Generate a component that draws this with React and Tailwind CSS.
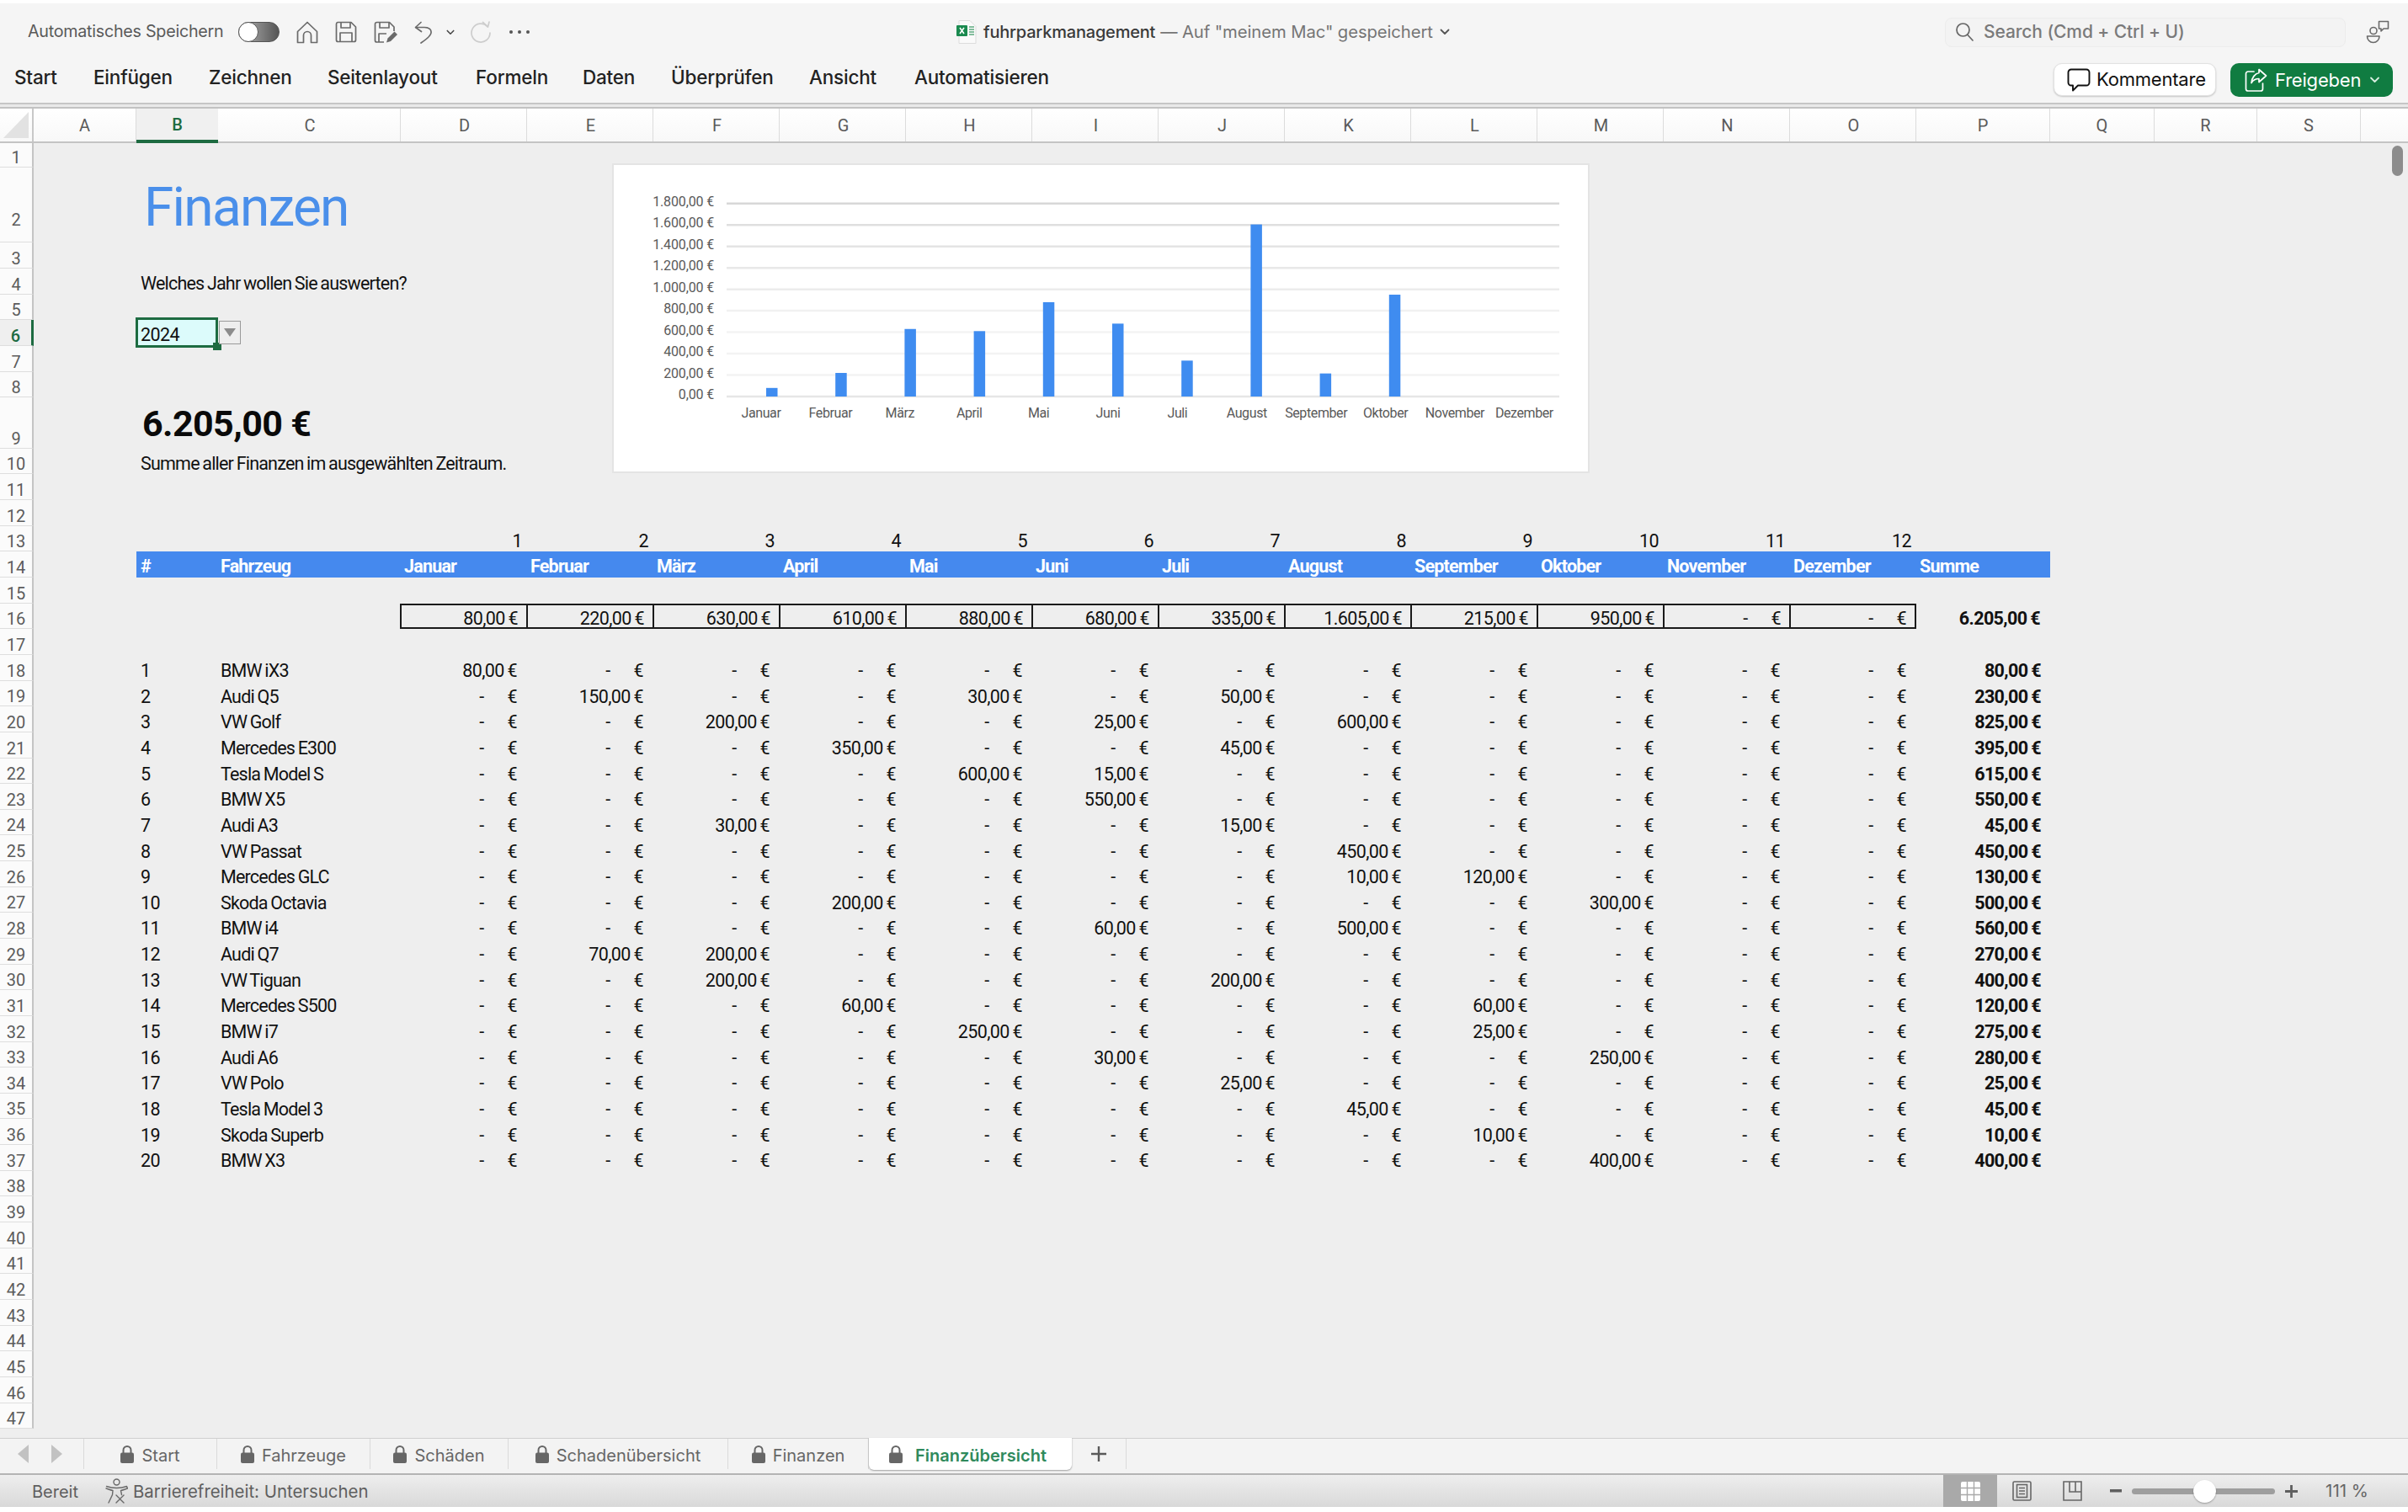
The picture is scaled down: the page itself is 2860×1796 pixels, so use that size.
import React from "react";

const MONTHS = ["Januar","Februar","März","April","Mai","Juni","Juli","August","September","Oktober","November","Dezember"];
const LETTERS = ["D","E","F","G","H","I","J","K","L","M","N","O"];
const TOTALS = ["80,00 €","220,00 €","630,00 €","610,00 €","880,00 €","680,00 €","335,00 €","1.605,00 €","215,00 €","950,00 €",null,null];
const VEHICLES = [
  ["BMW iX3",{0:"80,00"},"80,00"],
  ["Audi Q5",{1:"150,00",4:"30,00",6:"50,00"},"230,00"],
  ["VW Golf",{2:"200,00",5:"25,00",7:"600,00"},"825,00"],
  ["Mercedes E300",{3:"350,00",6:"45,00"},"395,00"],
  ["Tesla Model S",{4:"600,00",5:"15,00"},"615,00"],
  ["BMW X5",{5:"550,00"},"550,00"],
  ["Audi A3",{2:"30,00",6:"15,00"},"45,00"],
  ["VW Passat",{7:"450,00"},"450,00"],
  ["Mercedes GLC",{7:"10,00",8:"120,00"},"130,00"],
  ["Skoda Octavia",{3:"200,00",9:"300,00"},"500,00"],
  ["BMW i4",{5:"60,00",7:"500,00"},"560,00"],
  ["Audi Q7",{1:"70,00",2:"200,00"},"270,00"],
  ["VW Tiguan",{2:"200,00",6:"200,00"},"400,00"],
  ["Mercedes S500",{3:"60,00",8:"60,00"},"120,00"],
  ["BMW i7",{4:"250,00",8:"25,00"},"275,00"],
  ["Audi A6",{5:"30,00",9:"250,00"},"280,00"],
  ["VW Polo",{6:"25,00"},"25,00"],
  ["Tesla Model 3",{7:"45,00"},"45,00"],
  ["Skoda Superb",{8:"10,00"},"10,00"],
  ["BMW X3",{9:"400,00"},"400,00"],
];
const BARS = [80,220,630,610,880,680,335,1605,215,950];
const CELL = "font-['Roboto',sans-serif] text-[21.5px] tracking-[-0.6px] text-[#111] [word-spacing:-1px] leading-none whitespace-nowrap";
const PLAIN = "font-['Roboto',sans-serif] text-[21.5px] tracking-[-0.8px] text-[#111] [word-spacing:-1px] leading-none whitespace-nowrap";

function RowHead({ n, active, labelPad }) {
  return (
    <div className={`w-[40px] shrink-0 h-full flex items-end justify-center ${labelPad || "pb-[1px]"} leading-none border-b border-[#dedede] border-r-[2px] text-[20px] font-['Roboto',sans-serif] ${active ? "bg-[#efefef] text-[#1d6b41] font-medium border-r-[#1d6b41] border-r-[3px]" : "bg-[#fbfbfb] text-[#5c5c5c] border-r-[#c4c4c4]"}`}>
      {n}
    </div>
  );
}

function Row({ n, tall, active, labelPad, children }) {
  return (
    <div className={`flex ${tall || "h-[30.65px]"}`}>
      <RowHead n={n} active={active} labelPad={labelPad} />
      <div className="w-[122px] shrink-0" />
      {children}
    </div>
  );
}

function Money({ value, bold }) {
  return (
    <div className={`w-[150px] shrink-0 h-full flex items-center justify-end pr-[12px] pt-[7px] ${CELL} ${bold ? "font-bold" : ""}`}>
      {value ? <span>{value}</span> : (<><span>-</span><span className="ml-[28px]">€</span></>)}
    </div>
  );
}

function HomeIcon() {
  return (
    <svg width="26" height="27" viewBox="0 0 26 27" fill="none" stroke="#6a6a6a" strokeWidth="1.7" strokeLinejoin="round" strokeLinecap="round">
      <path d="M1.5 12.5 13 1.5l11.5 11V25.5h-7V17a4.5 4.5 0 0 0-9 0v8.5h-7z" />
    </svg>
  );
}
function SaveIcon() {
  return (
    <svg width="26" height="26" viewBox="0 0 26 26" fill="none" stroke="#6a6a6a" strokeWidth="1.7" strokeLinejoin="round">
      <path d="M3 1.5h16l5.5 5.5v15.5a2 2 0 0 1-2 2H3.500a2 2 0 0 1-2-2v-19a2 2 0 0 1 1.500-2z" />
      <path d="M7 1.500v6.500h11V1.500M6 24.500V14h14v10.500" />
    </svg>
  );
}
function SaveAsIcon() {
  return (
    <svg width="28" height="27" viewBox="0 0 28 27" fill="none" stroke="#6a6a6a" strokeWidth="1.7" strokeLinejoin="round">
      <path d="M12 25H3.500a2 2 0 0 1-2-2V3.500a2 2 0 0 1 2-2h15l5.500 5.500v5" />
      <path d="M7 1.500v6.500h11V1.500M6 25V15h9" />
      <path d="M15 25.500l1.500-5 8-8 3.500 3.500-8 8z" fill="#6a6a6a" stroke="none" />
    </svg>
  );
}
function UndoIcon() {
  return (
    <svg width="22" height="27" viewBox="0 0 22 27" fill="none" stroke="#6a6a6a" strokeWidth="1.7" strokeLinecap="round" strokeLinejoin="round">
      <path d="M8 1.500 1.500 7.500l7 5" />
      <path d="M2 7.500h10c6 0 8.500 3 8 6.500-.6 4-6 8-12 12" />
    </svg>
  );
}
function RedoIcon() {
  return (
    <svg width="26" height="26" viewBox="0 0 26 26" fill="none" stroke="#cdcdcd" strokeWidth="1.7" strokeLinecap="round" strokeLinejoin="round">
      <path d="M21 6.500A11 11 0 1 0 24 14" />
      <path d="M15.500 1.500 21.500 7l1.500-6" />
    </svg>
  );
}
function Chevron({ w = 12, h = 8, color = "#555" }) {
  return (
    <svg width={w} height={h} viewBox="0 0 12 8" fill="none" stroke={color} strokeWidth="1.8" strokeLinecap="round" strokeLinejoin="round">
      <path d="M1.500 1.500 6 6l4.500-4.500" />
    </svg>
  );
}
function ExcelIcon() {
  return (
    <svg width="24" height="28" viewBox="0 0 24 28">
      <path d="M3 0.500h13l7 7V27.500H3z" fill="#fafafa" stroke="#dcdcdc" />
      <rect x="0" y="6" width="13" height="13" rx="1" fill="#1a8a4f" />
      <path d="M4 9l5 7M9 9l-5 7" stroke="#fff" strokeWidth="1.600" />
      <path d="M15 8h6M15 11h6M15 14h6M15 17h6" stroke="#5ca97f" strokeWidth="1.600" />
    </svg>
  );
}
function PeopleIcon() {
  return (
    <svg width="28" height="28" viewBox="0 0 28 28" fill="none" stroke="#6a6a6a" strokeWidth="1.600" strokeLinejoin="round">
      <circle cx="9" cy="12.500" r="4" />
      <path d="M1.500 19h14.500c0 4-3 7.500-7.250 7.500S1.500 23 1.500 19z" />
      <path d="M15.500 1.500h11v8.500h-5.500l-3 3v-3h-2.500z" />
    </svg>
  );
}
function CommentIcon() {
  return (
    <svg width="28" height="28" viewBox="0 0 28 28" fill="none" stroke="#111" strokeWidth="1.900" strokeLinejoin="round">
      <path d="M5 1.500h18a3.500 3.500 0 0 1 3.500 3.500v12a3.500 3.500 0 0 1-3.500 3.500H13l-6 6v-6H5a3.500 3.500 0 0 1-3.500-3.500V5A3.500 3.500 0 0 1 5 1.500z" />
    </svg>
  );
}
function ShareIcon() {
  return (
    <svg width="27" height="28" viewBox="0 0 27 28" fill="none" stroke="#fff" strokeWidth="1.700" strokeLinejoin="round" strokeLinecap="round">
      <path d="M11 4H4a2.500 2.500 0 0 0-2.500 2.500v18A2.500 2.500 0 0 0 4 27h15a2.500 2.500 0 0 0 2.500-2.500V18" />
      <path d="M17 1.500l8.500 7.500-8.500 7.500v-4c-4 0-7 1.500-9 5 .5-6 4-11 9-12z" />
    </svg>
  );
}
function LockIcon({ color = "#666" }) {
  return (
    <svg width="16" height="21" viewBox="0 0 16 21">
      <path d="M3.500 9V5.500a4.500 4.500 0 0 1 9 0V9" fill="none" stroke={color} strokeWidth="2" />
      <rect x="0" y="8.500" width="16" height="12.500" rx="2" fill={color} />
    </svg>
  );
}
function A11yIcon() {
  return (
    <svg width="27" height="30" viewBox="0 0 27 30" fill="none" stroke="#6a6a6a" strokeWidth="1.400" strokeLinecap="round" strokeLinejoin="round">
      <circle cx="13.500" cy="4.500" r="3.500" />
      <path d="M1.500 9.500c4 1.500 7 2 12 2s8-.5 12-2l1 2.500c-3 1-5.500 2-8 2.500l1 5" />
      <path d="M1 12c3 1 5.500 2 8 2.500l-.5 5L4 29" />
      <path d="M13 20l9 9M22 20l-9 9" />
    </svg>
  );
}

function Chart() {
  const x0 = 134, x1 = 1123, y0 = 275, step = 25.47;
  const labels = ["0,00 €","200,00 €","400,00 €","600,00 €","800,00 €","1.000,00 €","1.200,00 €","1.400,00 €","1.600,00 €","1.800,00 €"];
  const grid = ["#e6e6e6","#f3f3f3","#f3f3f3","#f3f3f3","#f1f1f1","#ececec","#e8e8e8","#e4e4e4","#dfdfdf","#d8d8d8"];
  return (
    <div className="absolute left-[727px] top-[24px] w-[1161px] h-[368px] bg-white border-[2px] border-[#e4e4e4]">
      <svg width="1157" height="364" viewBox="0 0 1157 364" className="font-['Roboto',sans-serif]" fill="#595959" fontSize="16" letterSpacing="-0.150">
        {labels.map((l, i) => (
          <g key={l}>
            <line x1={x0} x2={x1} y1={y0 - i * step} y2={y0 - i * step} stroke={grid[i]} strokeWidth="2.500" />
            <text x="119" y={y0 - i * step + 3} textAnchor="end">{l}</text>
          </g>
        ))}
        {BARS.map((v, i) => {
          const h = (v / 1800) * (step * 9);
          return <rect key={i} x={181 + i * 82.2} y={y0 - h} width="13.500" height={h} fill="#3f8cf0" />;
        })}
        {MONTHS.map((m, i) => (
          <text key={m} x={x0 + 41 + i * 82.4} y="300" textAnchor="middle" letterSpacing="-0.400">{m}</text>
        ))}
      </svg>
    </div>
  );
}

const TABS = [
  ["Start","w-[158px]"],
  ["Fahrzeuge","w-[182px]"],
  ["Schäden","w-[164px]"],
  ["Schadenübersicht","w-[261px]"],
  ["Finanzen","w-[167px]"],
];

const MENU = [
  ["Start","w-[94px] ml-[17px]"],
  ["Einfügen","w-[137px]"],
  ["Zeichnen","w-[141px]"],
  ["Seitenlayout","w-[176px]"],
  ["Formeln","w-[127px]"],
  ["Daten","w-[105px]"],
  ["Überprüfen","w-[164px]"],
  ["Ansicht","w-[125px]"],
  ["Automatisieren","w-[170px]"],
];

export default function App() {
  return (
    <div className="w-[2860px] h-[1796px] overflow-hidden flex flex-col bg-white font-['Inter',sans-serif]">
      {/* Title bar */}
      <div className="h-[68px] mt-[4px] shrink-0 bg-[#f5f5f5] flex items-center text-[#666] relative">
        <span className="ml-[33px] w-[250px] text-[19.7px] tracking-[-0.25px] font-normal text-[#5a5a5a] whitespace-nowrap">Automatisches Speichern</span>
        <div className="w-[49px] h-[24px] rounded-full border border-[#555] bg-gradient-to-r from-[#bbb] to-[#555] relative">
          <div className="absolute left-[-1px] top-[-1px] w-[24px] h-[24px] rounded-full bg-white border border-[#555]" />
        </div>
        <div className="ml-[20px]"><HomeIcon /></div>
        <div className="ml-[20px]"><SaveIcon /></div>
        <div className="ml-[20px]"><SaveAsIcon /></div>
        <div className="ml-[20px]"><UndoIcon /></div>
        <div className="ml-[16px]"><Chevron w={10} h={7} color="#444" /></div>
        <div className="ml-[18px]"><RedoIcon /></div>
        <div className="ml-[21px] w-[24px] flex justify-between">
          <span className="w-[4px] h-[4px] rounded-full bg-[#555]" />
          <span className="w-[4px] h-[4px] rounded-full bg-[#555]" />
          <span className="w-[4px] h-[4px] rounded-full bg-[#555]" />
        </div>
        <div className="ml-[507px]"><ExcelIcon /></div>
        <span className="ml-[8px] text-[20px] tracking-[-0.2px] font-medium text-[#3a3a3a] whitespace-nowrap">fuhrparkmanagement</span>
        <span className="ml-[6px] text-[20.3px] tracking-[-0.1px] text-[#757575] whitespace-nowrap">— Auf "meinem Mac" gespeichert</span>
        <div className="ml-[8px]"><Chevron /></div>
        <div className="ml-auto w-[476px] h-[35px] rounded-[8px] border border-[#ececec] bg-[#f3f3f3] flex items-center pl-[12px]">
          <svg width="21" height="22" viewBox="0 0 21 22" fill="none" stroke="#666" strokeWidth="1.700" strokeLinecap="round">
            <circle cx="8.500" cy="8.500" r="7.500" /><path d="M14 14.500l6 6.500" />
          </svg>
          <span className="ml-[12px] text-[21px] font-medium tracking-[-0.1px] text-[#7a7a7a] whitespace-nowrap">Search (Cmd + Ctrl + U)</span>
        </div>
        <div className="ml-[24px] mr-[22px]"><PeopleIcon /></div>
      </div>
      {/* Ribbon tabs */}
      <div className="h-[50px] shrink-0 bg-[#f5f5f5] flex items-start text-[22.5px] font-medium text-[#222] tracking-[-0.2px] whitespace-nowrap relative">
        {MENU.map(([t, c]) => <span key={t} className={`${c} mt-[3px] shrink-0`}>{t}</span>)}
        <div className="ml-auto w-[193px] h-[39px] mt-[3px] rounded-[10px] bg-white border border-[#e2e2e2] shadow-[0_1px_2px_rgba(0,0,0,0.2)] flex items-center pl-[15px] text-[22px] text-[#111] font-normal">
          <CommentIcon />
          <span className="ml-[7px]">Kommentare</span>
        </div>
        <div className="ml-[17px] mr-[18px] w-[193px] h-[40px] mt-[3px] rounded-[10px] bg-[#107c41] flex items-center pl-[17px] text-[22px] text-white font-normal">
          <ShareIcon />
          <span className="ml-[9px]">Freigeben</span>
          <div className="ml-[10px]"><Chevron w={13} h={8} color="#d8eee0" /></div>
        </div>
      </div>
      {/* separator */}
      <div className="h-[7px] shrink-0 bg-[#e9e9e9] border-t-[2px] border-b-[2px] border-t-[#c6c6c6] border-b-[#c2c2c2]" />
      {/* Column header */}
      <div className="h-[41px] shrink-0 flex bg-gradient-to-b from-white to-[#f8f8f8] border-b-[2px] border-[#c4c4c4] text-[20px] text-[#5a5a5a] font-['Roboto',sans-serif]">
        <div className="w-[40px] shrink-0 border-r-[2px] border-[#c8c8c8] flex items-center justify-center">
          <svg width="30" height="31" viewBox="0 0 30 31"><path d="M30 0v31H0z" fill="#e2e2e2" /></svg>
        </div>
        <div className="w-[122px] shrink-0 border-r border-[#dcdcdc] flex items-center justify-center">A</div>
        <div className="w-[97px] shrink-0 flex items-center justify-center bg-[#f0f0f0] text-[#1d6b41] font-medium border-b-[4px] border-[#1d6b41] -mb-[2px]">B</div>
        <div className="w-[217px] shrink-0 border-r border-[#dcdcdc] flex items-center justify-center pl-[2px]">C</div>
        {LETTERS.map((l) => (
          <div key={l} className="w-[150px] shrink-0 border-r border-[#dcdcdc] flex items-center justify-center pl-[2px]">{l}</div>
        ))}
        <div className="w-[159px] shrink-0 border-r border-[#dcdcdc] flex items-center justify-center">P</div>
        <div className="w-[124px] shrink-0 border-r border-[#dcdcdc] flex items-center justify-center">Q</div>
        <div className="w-[122px] shrink-0 border-r border-[#dcdcdc] flex items-center justify-center">R</div>
        <div className="w-[123px] shrink-0 border-r border-[#dcdcdc] flex items-center justify-center">S</div>
      </div>
      {/* Sheet */}
      <div className="flex-1 min-h-0 relative bg-[#eeeeee] overflow-hidden">
        <Row n={1} tall="h-[29.300px]" />
        <Row n={2} tall="h-[89px]" labelPad="pb-[16px]">
          <span className="ml-[9px] mt-[7px] text-[#4a8fea] font-['Roboto',sans-serif] text-[64px] tracking-[-1.800px] leading-none whitespace-nowrap self-center">Finanzen</span>
        </Row>
        <Row n={3} />
        <Row n={4}>
          <span className={`ml-[5px] self-center pt-[4px] ${PLAIN}`}>Welches Jahr wollen Sie auswerten?</span>
        </Row>
        <Row n={5} />
        <Row n={6} active>
          <div className="w-[97px] shrink-0 relative">
            <div className={`absolute -left-[1px] -top-[3px] -bottom-[2px] right-0 bg-[#dcfbfb] border-[3px] border-[#1d6b41] flex items-center pl-[3px] pt-[5px] ${CELL}`}>2024</div>
            <div className="absolute right-[-4px] bottom-[-5px] w-[10px] h-[9px] bg-[#1d6b41]" />
            <div className="absolute left-[98px] top-[1px] w-[26px] h-[28px] bg-[#eeeeee] border border-[#9a9a9a] flex items-center justify-center">
              <svg width="14" height="10" viewBox="0 0 14 10"><path d="M0 0h14L7 10z" fill="#8c8c8c" /></svg>
            </div>
          </div>
        </Row>
        <Row n={7} />
        <Row n={8} />
        <Row n={9} tall="h-[60.700px]">
          <span className="ml-[7px] pt-[3px] self-center font-['Roboto',sans-serif] font-bold text-[43px] tracking-[-0.600px] text-[#0a0a0a] leading-none whitespace-nowrap">6.205,00 €</span>
        </Row>
        <Row n={10}>
          <span className={`ml-[5px] self-center pt-[6px] ${PLAIN}`}>Summe aller Finanzen im ausgewählten Zeitraum.</span>
        </Row>
        <Row n={11} />
        <Row n={12} />
        <Row n={13}>
          <div className="w-[314px] shrink-0" />
          {MONTHS.map((m, i) => (
            <div key={m} className={`w-[150px] shrink-0 flex items-center justify-end pr-[6px] pt-[6px] ${CELL}`}>{i + 1}</div>
          ))}
        </Row>
        <Row n={14}>
          <div className={`w-[2273px] shrink-0 h-full flex items-center pt-[4px] bg-[#4589ee] ${PLAIN} text-white font-bold`}>
            <div className="w-[97px] shrink-0 pl-[5px]">#</div>
            <div className="w-[217px] shrink-0 pl-[3px]">Fahrzeug</div>
            {MONTHS.map((m) => <div key={m} className="w-[150px] shrink-0 pl-[4px]">{m}</div>)}
            <div className="pl-[4px]">Summe</div>
          </div>
        </Row>
        <Row n={15} />
        <Row n={16}>
          <div className="w-[314px] shrink-0" />
          <div className="flex h-full border-[2px] border-[#1a1a1a] -ml-[1px]">
            {TOTALS.map((v, i) => (
              <div key={i} className={`${i < 11 ? "w-[150px] border-r-[2px] border-[#1a1a1a]" : "w-[147px]"} shrink-0 h-full flex items-center justify-end pr-[10px] pt-[5px] ${CELL}`}>
                {v ? <span>{v}</span> : (<><span>-</span><span className="ml-[28px]">€</span></>)}
              </div>
            ))}
          </div>
          <div className={`w-[159px] shrink-0 h-full flex items-center justify-end pr-[11px] pt-[5px] -ml-[1px] ${CELL} font-bold`}>6.205,00 €</div>
        </Row>
        <Row n={17} />
        {VEHICLES.map(([name, vals, sum], i) => (
          <Row key={name} n={18 + i}>
            <div className={`w-[97px] shrink-0 h-full flex items-center pl-[5px] pt-[7px] ${CELL}`}>{i + 1}</div>
            <div className={`w-[217px] shrink-0 h-full flex items-center pl-[3px] pt-[7px] ${PLAIN}`}>{name}</div>
            {MONTHS.map((m, j) => <Money key={m} value={vals[j] ? `${vals[j]} €` : null} />)}
            <div className={`w-[159px] shrink-0 h-full flex items-center justify-end pr-[11px] pt-[7px] ${CELL} font-bold`}>{sum} €</div>
          </Row>
        ))}
        {Array.from({ length: 10 }, (_, i) => <Row key={i} n={38 + i} />)}
        <Chart />
        <div className="absolute right-[6px] top-[3px] w-[13px] h-[36px] rounded-full bg-[#8c8c8c]" />
      </div>
      {/* Tabs */}
      <div className="h-[44px] shrink-0 bg-[#f3f3f3] border-t border-[#cfcfcf] border-b-[2px] border-b-[#b4b4b4] flex text-[20px] text-[#666] whitespace-nowrap">
        <div className="w-[100px] shrink-0 h-[36px] flex items-center pl-[21px] border-r border-[#dadada]">
          <svg width="13" height="22" viewBox="0 0 13 22"><path d="M13 0v22L0 11z" fill="#c2c2c2" /></svg>
          <svg className="ml-[27px]" width="13" height="22" viewBox="0 0 13 22"><path d="M0 0v22l13-11z" fill="#c2c2c2" /></svg>
        </div>
        {TABS.map(([t, w]) => (
          <div key={t} className={`${w} shrink-0 h-[36px] flex items-center justify-center gap-[10px] border-r border-[#dadada]`}>
            <LockIcon />
            <span className="pt-[3px] -ml-[1px]">{t}</span>
          </div>
        ))}
        <div className="w-[241px] shrink-0 h-[38px] -mt-[1px] flex items-center pl-[24px] bg-white rounded-b-[6px] shadow-[0_1px_2px_rgba(0,0,0,0.35)] z-10">
          <LockIcon />
          <span className="ml-[15px] pt-[3px] font-semibold text-[#2f8a5c]">Finanzübersicht</span>
        </div>
        <div className="w-[65px] shrink-0 h-[36px] flex items-center justify-center border-r border-[#dadada]">
          <svg width="18" height="18" viewBox="0 0 18 18"><path d="M9 0v18M0 9h18" stroke="#5a5a5a" strokeWidth="2.400" /></svg>
        </div>
      </div>
      {/* Status bar */}
      <div className="h-[38px] shrink-0 bg-gradient-to-b from-[#eeeeee] to-[#d9d9d9] flex items-center text-[20px] text-[#5f5f5f] whitespace-nowrap">
        <span className="ml-[38px] pt-[2px]">Bereit</span>
        <div className="ml-[32px]"><A11yIcon /></div>
        <span className="ml-[6px] pt-[2px] text-[20.4px]">Barrierefreiheit: Untersuchen</span>
        <div className="ml-auto w-[64px] h-full bg-[#a9a9a9] flex items-center justify-center">
          <svg width="23" height="23" viewBox="0 0 23 23">
            <rect width="23" height="23" rx="2" fill="#fff" />
            <path d="M7.500 0v23M15.500 0v23M0 7.500h23M0 15.500h23" stroke="#a9a9a9" strokeWidth="1.400" />
          </svg>
        </div>
        <div className="ml-[18px]">
          <svg width="23" height="24" viewBox="0 0 23 24" fill="none" stroke="#666" strokeWidth="1.600">
            <rect x="1" y="1" width="21" height="22" rx="1.500" /><rect x="5.500" y="4.500" width="12" height="15" /><path d="M8 8.500h7M8 12h7M8 15.500h7" />
          </svg>
        </div>
        <div className="ml-[37px]">
          <svg width="23" height="24" viewBox="0 0 23 24" fill="none" stroke="#666" strokeWidth="1.600">
            <path d="M1 1h21v22H1zM8 1v12h7V1M15 13h7" />
          </svg>
        </div>
        <div className="ml-[33px]">
          <svg width="14" height="4" viewBox="0 0 14 4"><rect width="14" height="3.500" fill="#5f5f5f" /></svg>
        </div>
        <div className="ml-[12px] w-[170px] h-[7px] rounded-full bg-[#9e9e9e] relative">
          <div className="absolute left-[73px] top-[-10px] w-[27px] h-[27px] rounded-full bg-white shadow-[0_1px_2px_rgba(0,0,0,0.3)]" />
        </div>
        <div className="ml-[12px]">
          <svg width="15" height="15" viewBox="0 0 15 15"><path d="M7.500 0v15M0 7.500h15" stroke="#5f5f5f" strokeWidth="2.800" /></svg>
        </div>
        <span className="ml-[33px] mr-[47px] text-[20.500px] text-[#666]">111 %</span>
      </div>
      <div className="h-[6px] shrink-0 bg-white" />
    </div>
  );
}
